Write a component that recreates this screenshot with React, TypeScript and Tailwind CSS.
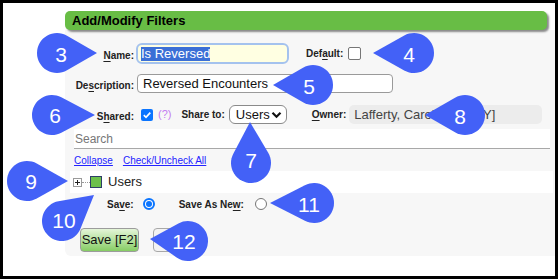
import type { ReactNode } from 'react'

type Drop = { n: string; cx: number; cy: number; r: number; tx: number; ty: number; lx: number; ly: number }

const DROPS: Drop[] = [
  { n: '3', cx: 57, cy: 53, r: 20, tx: 97, ty: 53, lx: 61, ly: 54 },
  { n: '4', cx: 414, cy: 53, r: 20, tx: 373, ty: 53, lx: 409, ly: 54 },
  { n: '5', cx: 313, cy: 85, r: 20, tx: 273, ty: 85, lx: 309, ly: 86 },
  { n: '6', cx: 52, cy: 115, r: 20, tx: 95, ty: 115, lx: 55, ly: 115 },
  { n: '7', cx: 251, cy: 163, r: 20, tx: 250, ty: 122, lx: 251, ly: 160 },
  { n: '8', cx: 465, cy: 115, r: 20, tx: 425, ty: 115, lx: 460, ly: 116 },
  { n: '9', cx: 27, cy: 181, r: 20, tx: 68, ty: 181, lx: 31, ly: 181 },
  { n: '10', cx: 62, cy: 221, r: 20, tx: 94, ty: 195, lx: 64, ly: 220 },
  { n: '11', cx: 314, cy: 203, r: 20, tx: 270, ty: 203, lx: 309, ly: 204 },
  { n: '12', cx: 188, cy: 241, r: 20, tx: 150, ty: 239, lx: 184, ly: 241 },
]

// circle + tangent lines to the tip
function dropPath(d: Drop) {
  const dx = d.tx - d.cx, dy = d.ty - d.cy
  const dist = Math.hypot(dx, dy)
  const th = Math.atan2(dy, dx)
  const a = Math.acos(d.r / dist)
  const p1x = d.cx + d.r * Math.cos(th + a), p1y = d.cy + d.r * Math.sin(th + a)
  const p2x = d.cx + d.r * Math.cos(th - a), p2y = d.cy + d.r * Math.sin(th - a)
  return `M${d.tx} ${d.ty} L${p1x} ${p1y} A${d.r} ${d.r} 0 1 1 ${p2x} ${p2y} Z`
}

function Label({ children, className = '' }: { children: ReactNode; className?: string }) {
  return <span className={`text-[10px] font-bold text-[#222] whitespace-nowrap ${className}`}>{children}</span>
}

function U({ children }: { children: ReactNode }) {
  return <span className="underline underline-offset-2">{children}</span>
}

export default function App() {
  return (
    <div className="relative w-[558px] h-[279px] border-[3px] border-black bg-white font-['Liberation_Sans',Arial,sans-serif] overflow-hidden">
      <div className="pl-[62px] pt-[8px]">
        <div className="w-[490px]">
          <div className="w-[482px] h-[19px] bg-[#68bd45] rounded-[5px] shadow-[2px_2px_2px_#8a8a8a] pl-[7px] text-[13px] leading-[19px] font-bold text-black relative z-10">
            Add/Modify Filters
          </div>

          <div className="bg-[#f7f7f7] rounded-bl-[6px] pb-[4px]">
            {/* name */}
            <div className="pt-[13px]">
              <div className="flex items-center h-[21px]">
                <div className="w-[69px] text-right"><Label><U>N</U>ame:</Label></div>
                <div className="ml-[2px] w-[153px] h-[21px] rounded-[6px] border-2 border-[#a4c2ee] bg-[#ffffe2] flex items-center pl-[3px]">
                  <span className="bg-[#3b6fd6] text-white text-[13px] leading-[14px]">Is Reversed</span>
                </div>
                <Label className="ml-[17px]">Def<U>a</U>ult:</Label>
                <div className="ml-[5px] w-[13px] h-[13px] border border-[#767676] rounded-[2px] bg-white" />
              </div>
            </div>

            {/* description */}
            <div className="flex items-center h-[19px] mt-[10px]">
              <div className="w-[69px] text-right"><Label>De<U>s</U>cription:</Label></div>
              <div className="ml-[3px] w-[256px] h-[19px] rounded-[4px] border border-[#9a9a9a] bg-white pl-[5px] text-[13px] leading-[17px] text-[#111]">
                Reversed Encounters
              </div>
            </div>

            {/* shared */}
            <div className="flex items-center h-[19px] mt-[12px]">
              <div className="w-[69px] text-right"><Label>S<U>h</U>ared:</Label></div>
              <div className="ml-[7px] w-[12px] h-[12px] rounded-[2px] bg-[#0b75ff] flex items-center justify-center">
                <svg width="10" height="10" viewBox="0 0 10 10"><path d="M1.8 5.2 L4 7.3 L8.3 2.6" fill="none" stroke="white" strokeWidth="1.7" /></svg>
              </div>
              <span className="ml-[5px] text-[11px] text-[#c47cf2]">(?)</span>
              <Label className="ml-[10px]">Sha<U>r</U>e to:</Label>
              <div className="ml-[4px] w-[58px] h-[19px] rounded-[6px] border border-[#8a8a8a] bg-white flex items-center pl-[6px] pr-[4px] justify-between">
                <span className="text-[13px] text-[#111]">Users</span>
                <svg width="11" height="8" viewBox="0 0 11 8"><path d="M1.5 1.8 L5.5 5.8 L9.5 1.8" fill="none" stroke="#111" strokeWidth="2.2" /></svg>
              </div>
              <Label className="ml-[25px]"><U>O</U>wner:</Label>
              <div className="ml-[3px] w-[193px] h-[19px] rounded-[5px] bg-[#ececec] pl-[5px] text-[13px] leading-[19px] text-[#444] whitespace-nowrap overflow-hidden">
                Lafferty, Carol [CLAFFY]
              </div>
            </div>

            {/* search */}
            <div className="ml-[9px] mt-[5px] w-[476px] h-[20px] bg-white border-b border-[#a8a8a8] text-[12px] leading-[20px] text-[#777] pl-[1px]">
              Search
            </div>

            {/* links */}
            <div className="ml-[9px] mt-[4px] h-[14px] flex items-center gap-[10px] text-[10px] text-[#2323ff]">
              <span className="underline">Collapse</span>
              <span className="underline">Check/Uncheck All</span>
            </div>

            {/* tree */}
            <div className="ml-[5px] mt-[4px] w-[483px] h-[22px] bg-white flex items-center pl-[3px]">
              <div className="w-[9px] h-[9px] border border-[#9a9a9a] bg-white flex items-center justify-center">
                <svg width="7" height="7" viewBox="0 0 7 7"><path d="M1 3.5 H6 M3.5 1 V6" stroke="#222" strokeWidth="1" /></svg>
              </div>
              <div className="w-[8px] border-t border-dotted border-[#999]" />
              <div className="w-[12px] h-[12px] border-[1.5px] border-[#2d3e66] bg-[#6cc04a]" />
              <span className="ml-[6px] text-[13px] text-[#222]">Users</span>
            </div>

            {/* save options */}
            <div className="mt-[3px] h-[16px] flex items-center pl-[42px]">
              <Label>Sa<U>v</U>e:</Label>
              <div className="ml-[9px] w-[12px] h-[12px] rounded-full border-2 border-[#0b75ff] bg-white flex items-center justify-center">
                <div className="w-[6px] h-[6px] rounded-full bg-[#0b75ff]" />
              </div>
              <Label className="ml-[24px]">Save As Ne<U>w</U>:</Label>
              <div className="ml-[11px] w-[12px] h-[12px] rounded-full border border-[#767676] bg-white" />
            </div>

            {/* buttons */}
            <div className="mt-[16px] h-[24px] flex items-center pl-[15px]">
              <div className="w-[59px] h-[24px] rounded-[4px] border border-[#9c9c9c] bg-gradient-to-b from-[#e4f5d8] to-[#86cd63] text-[13px] leading-[22px] text-center text-[#111]">
                Save [F2]
              </div>
              <div className="ml-[14px] w-[40px] h-[24px] rounded-[4px] border border-[#a8a8a8] bg-[#f3f3f3]" />
            </div>
          </div>
        </div>
      </div>

      <svg className="absolute left-[-3px] top-[-3px] pointer-events-none" width="558" height="280" viewBox="0 0 558 280">
        {DROPS.map(d => (
          <g key={d.n}>
            <path d={dropPath(d)} fill="#4361f7" />
            <text x={d.lx} y={d.ly} fill="white" fontSize="21" textAnchor="middle" dominantBaseline="central"
              fontFamily="'Liberation Sans', Arial, sans-serif">{d.n}</text>
          </g>
        ))}
      </svg>
    </div>
  )
}
